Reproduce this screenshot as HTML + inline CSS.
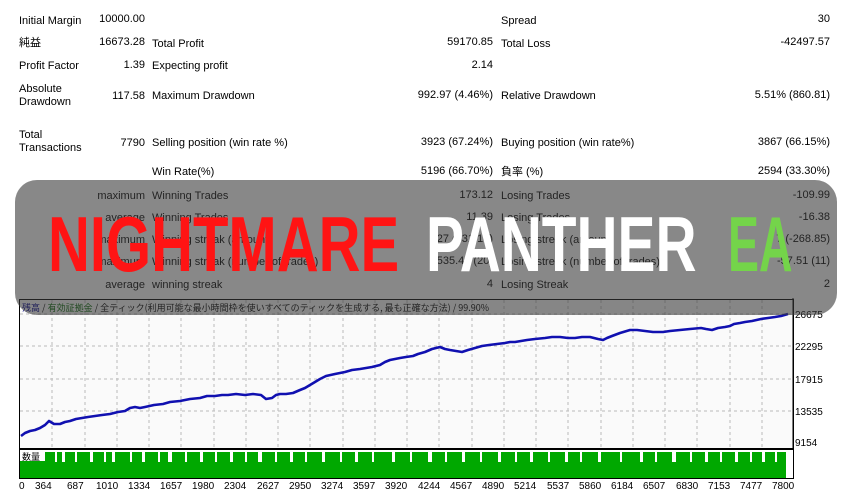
<!DOCTYPE html>
<html><head><meta charset="utf-8"><style>
*{margin:0;padding:0}
body{width:850px;height:500px;background:#fff;position:relative;overflow:hidden;font-family:"Liberation Sans","Noto Sans CJK JP",sans-serif;font-size:11px;color:#000}
.t{position:absolute;white-space:nowrap;line-height:13px}
.r{text-align:right}
</style></head><body>
<div class="t" style="left:19px;top:15px">Initial Margin</div><div class="t r" style="right:705px;top:13px">10000.00</div>
<div class="t" style="left:501px;top:15px">Spread</div><div class="t r" style="right:20px;top:13px">30</div>
<div class="t" style="left:19px;top:37px">純益</div><div class="t r" style="right:705px;top:36px">16673.28</div>
<div class="t" style="left:152px;top:38px">Total Profit</div><div class="t r" style="right:357px;top:36px">59170.85</div>
<div class="t" style="left:501px;top:38px">Total Loss</div><div class="t r" style="right:20px;top:36px">-42497.57</div>
<div class="t" style="left:19px;top:60px">Profit Factor</div><div class="t r" style="right:705px;top:59px">1.39</div>
<div class="t" style="left:152px;top:60px">Expecting profit</div><div class="t r" style="right:357px;top:59px">2.14</div>
<div class="t" style="left:19px;top:83px">Absolute<br>Drawdown</div><div class="t r" style="right:705px;top:90px">117.58</div>
<div class="t" style="left:152px;top:90px">Maximum Drawdown</div><div class="t r" style="right:357px;top:89px">992.97 (4.46%)</div>
<div class="t" style="left:501px;top:90px">Relative Drawdown</div><div class="t r" style="right:20px;top:89px">5.51% (860.81)</div>
<div class="t" style="left:19px;top:129px">Total<br>Transactions</div><div class="t r" style="right:705px;top:137px">7790</div>
<div class="t" style="left:152px;top:137px">Selling position (win rate %)</div><div class="t r" style="right:357px;top:136px">3923 (67.24%)</div>
<div class="t" style="left:501px;top:137px">Buying position (win rate%)</div><div class="t r" style="right:20px;top:136px">3867 (66.15%)</div>
<div class="t" style="left:152px;top:166px">Win Rate(%)</div><div class="t r" style="right:357px;top:165px">5196 (66.70%)</div>
<div class="t" style="left:501px;top:166px">負率 (%)</div><div class="t r" style="right:20px;top:165px">2594 (33.30%)</div>
<div class="t r" style="right:705px;top:190px">maximum</div><div class="t" style="left:152px;top:190px">Winning Trades</div><div class="t r" style="right:357px;top:189px">173.12</div><div class="t" style="left:501px;top:190px">Losing Trades</div><div class="t r" style="right:20px;top:189px">-109.99</div>
<div class="t r" style="right:705px;top:212px">average</div><div class="t" style="left:152px;top:212px">Winning Trades</div><div class="t r" style="right:357px;top:211px">11.39</div><div class="t" style="left:501px;top:212px">Losing Trades</div><div class="t r" style="right:20px;top:211px">-16.38</div>
<div class="t r" style="right:705px;top:234px">maximum</div><div class="t" style="left:152px;top:234px">Winning streak (amount)</div><div class="t r" style="right:357px;top:233px">27 (431.10)</div><div class="t" style="left:501px;top:234px">Losing streak (amount)</div><div class="t r" style="right:20px;top:233px">7 (-268.85)</div>
<div class="t r" style="right:705px;top:256px">maximum</div><div class="t" style="left:152px;top:256px">Winning streak (number of trades)</div><div class="t r" style="right:357px;top:255px">535.40 (20)</div><div class="t" style="left:501px;top:256px">Losing streak (number of trades)</div><div class="t r" style="right:20px;top:255px">-57.51 (11)</div>
<div class="t r" style="right:705px;top:279px">average</div><div class="t" style="left:152px;top:279px">winning streak</div><div class="t r" style="right:357px;top:278px">4</div><div class="t" style="left:501px;top:279px">Losing Streak</div><div class="t r" style="right:20px;top:278px">2</div>

<svg style="position:absolute;left:0;top:0" width="850" height="500">
<rect x="19.5" y="299.5" width="774" height="149" fill="#fafafa" stroke="#000"/>
<g stroke="#bbb" stroke-dasharray="3,3">
<line x1="20" y1="314" x2="793" y2="314"/><line x1="20" y1="346" x2="793" y2="346"/><line x1="20" y1="379" x2="793" y2="379"/><line x1="20" y1="411" x2="793" y2="411"/>
<line x1="52" y1="300" x2="52" y2="448"/><line x1="85" y1="300" x2="85" y2="448"/><line x1="117" y1="300" x2="117" y2="448"/><line x1="149" y1="300" x2="149" y2="448"/><line x1="181" y1="300" x2="181" y2="448"/><line x1="214" y1="300" x2="214" y2="448"/><line x1="246" y1="300" x2="246" y2="448"/><line x1="278" y1="300" x2="278" y2="448"/><line x1="310" y1="300" x2="310" y2="448"/><line x1="343" y1="300" x2="343" y2="448"/><line x1="375" y1="300" x2="375" y2="448"/><line x1="407" y1="300" x2="407" y2="448"/><line x1="439" y1="300" x2="439" y2="448"/><line x1="472" y1="300" x2="472" y2="448"/><line x1="504" y1="300" x2="504" y2="448"/><line x1="536" y1="300" x2="536" y2="448"/><line x1="568" y1="300" x2="568" y2="448"/><line x1="601" y1="300" x2="601" y2="448"/><line x1="633" y1="300" x2="633" y2="448"/><line x1="665" y1="300" x2="665" y2="448"/><line x1="697" y1="300" x2="697" y2="448"/><line x1="730" y1="300" x2="730" y2="448"/><line x1="762" y1="300" x2="762" y2="448"/>
</g>
<polyline fill="none" stroke="#1010b0" stroke-width="2.6" stroke-linejoin="round" points="21,436 25,433 30,431 35,430 40,428 45,425 49,421 54,424 60,424 65,422 70,421 76,419 82,418 88,417 95,416 102,415 110,414 118,412 125,411 130,408 135,407 140,408 145,407 154,405 163,404 170,402 180,401 190,399 200,398 207,396 215,396 222,395 228,395 236,394 245,395 253,394 261,395 266,399 272,398 276,395 280,394 286,394 293,393 300,390 305,388 310,385 315,382 320,379 326,376 335,374 345,372 352,370 360,369 366,368 372,367 376,366 380,365 385,362 390,360 395,359 400,358 406,357 413,356 418,354 425,352 432,349 440,347 445,349 450,350 456,351 462,352 468,350 475,348 482,346 489,345 497,344 505,343 510,342 515,342 521,341 527,340 535,339 545,338 552,337 560,337 568,338 575,338 582,337 590,337 594,338 598,339 603,340 607,338 612,336 620,333 630,330 637,330 645,331 653,332 663,332 670,331 680,330 690,329 701,328 706,329 712,330 718,328 725,327 730,326 734,324 740,323 745,322 752,321 761,319 768,318 775,317 781,316 788,314"/>
<line x1="793" y1="298" x2="793" y2="450" stroke="#000"/>
<rect x="19.5" y="449.5" width="774" height="29" fill="#fff" stroke="#000"/>
<rect x="20" y="452" width="766" height="26" fill="#00a800"/>
<g fill="#fff">
<rect x="20" y="452" width="25" height="9"/><rect x="55" y="452" width="2" height="10"/><rect x="62" y="452" width="3" height="10"/><rect x="75" y="452" width="2" height="10"/><rect x="90" y="452" width="3" height="10"/><rect x="104" y="452" width="2" height="10"/><rect x="112" y="452" width="3" height="10"/><rect x="130" y="452" width="2" height="10"/><rect x="142" y="452" width="3" height="10"/><rect x="158" y="452" width="2" height="10"/><rect x="168" y="452" width="4" height="10"/><rect x="185" y="452" width="2" height="10"/><rect x="200" y="452" width="3" height="10"/><rect x="215" y="452" width="2" height="10"/><rect x="230" y="452" width="3" height="10"/><rect x="245" y="452" width="2" height="10"/><rect x="258" y="452" width="4" height="10"/><rect x="275" y="452" width="2" height="10"/><rect x="290" y="452" width="3" height="10"/><rect x="305" y="452" width="2" height="10"/><rect x="322" y="452" width="3" height="10"/><rect x="340" y="452" width="2" height="10"/><rect x="355" y="452" width="3" height="10"/><rect x="372" y="452" width="2" height="10"/><rect x="392" y="452" width="3" height="10"/><rect x="410" y="452" width="2" height="10"/><rect x="428" y="452" width="4" height="10"/><rect x="445" y="452" width="2" height="10"/><rect x="462" y="452" width="3" height="10"/><rect x="480" y="452" width="2" height="10"/><rect x="498" y="452" width="3" height="10"/><rect x="515" y="452" width="2" height="10"/><rect x="530" y="452" width="3" height="10"/><rect x="548" y="452" width="2" height="10"/><rect x="565" y="452" width="3" height="10"/><rect x="580" y="452" width="2" height="10"/><rect x="598" y="452" width="3" height="10"/><rect x="620" y="452" width="2" height="10"/><rect x="640" y="452" width="3" height="10"/><rect x="655" y="452" width="2" height="10"/><rect x="672" y="452" width="4" height="10"/><rect x="690" y="452" width="2" height="10"/><rect x="705" y="452" width="3" height="10"/><rect x="720" y="452" width="2" height="10"/><rect x="735" y="452" width="3" height="10"/><rect x="750" y="452" width="2" height="10"/><rect x="762" y="452" width="3" height="10"/><rect x="775" y="452" width="2" height="10"/>
</g>
<text x="22" y="460" font-size="9" font-family="Noto Sans CJK JP,sans-serif">数量</text>
<g font-size="10" font-family="Liberation Sans,sans-serif">
<text x="795" y="318">26675</text><text x="795" y="350">22295</text><text x="795" y="383">17915</text><text x="795" y="415">13535</text><text x="795" y="446">9154</text>
<text x="19" y="489">0</text><text x="35" y="489">364</text><text x="67" y="489">687</text><text x="96" y="489">1010</text><text x="128" y="489">1334</text><text x="160" y="489">1657</text><text x="192" y="489">1980</text><text x="224" y="489">2304</text><text x="257" y="489">2627</text><text x="289" y="489">2950</text><text x="321" y="489">3274</text><text x="353" y="489">3597</text><text x="385" y="489">3920</text><text x="418" y="489">4244</text><text x="450" y="489">4567</text><text x="482" y="489">4890</text><text x="514" y="489">5214</text><text x="547" y="489">5537</text><text x="579" y="489">5860</text><text x="611" y="489">6184</text><text x="643" y="489">6507</text><text x="676" y="489">6830</text><text x="708" y="489">7153</text><text x="740" y="489">7477</text><text x="772" y="489">7800</text>
</g>
<text x="22" y="311" font-size="9" font-family="Noto Sans CJK JP,sans-serif"><tspan fill="#00008b">残高</tspan> / <tspan fill="#006400">有効証拠金</tspan> / 全ティック(利用可能な最小時間枠を使いすべてのティックを生成する, 最も正確な方法) / 99.90%</text>
<rect x="15" y="180" width="822" height="135" rx="22" fill="rgba(57,57,57,0.6)"/>
<g font-size="58" font-weight="bold" font-family="Liberation Sans,sans-serif">
<text transform="translate(48,271) scale(1,1.34)" fill="#ff1414">NIGHTMARE</text>
<text transform="translate(426,271) scale(0.98,1.34)" fill="#fff">PANTHER</text>
<text transform="translate(728,271) scale(0.8,1.34)" fill="#74d44a">EA</text>
</g>
</svg>
</body></html>
